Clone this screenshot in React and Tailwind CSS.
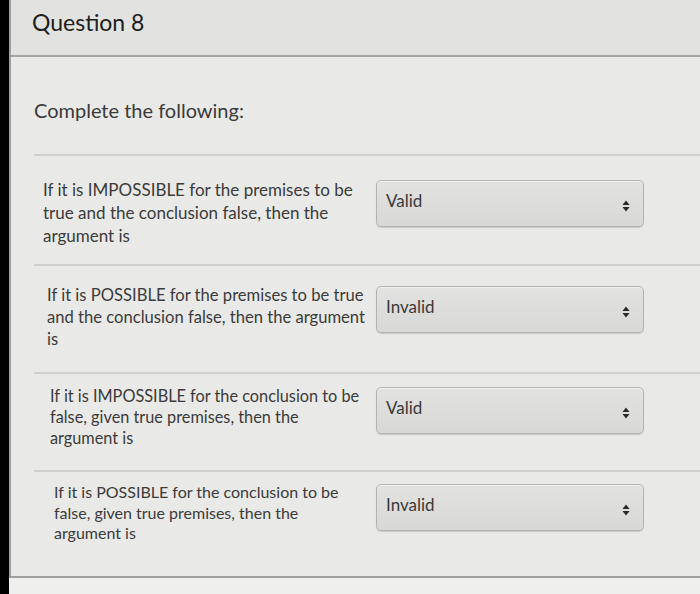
import React from "react";

const rows = [
  {
    lines: ["If it is IMPOSSIBLE for the premises to be", "true and the conclusion false, then the", "argument is"],
    value: "Valid",
    h: "h-[110px]",
    fs: "text-[17px] leading-[23px] pl-[9px]",
    pt: "pt-[22px]",
  },
  {
    lines: ["If it is POSSIBLE for the premises to be true", "and the conclusion false, then the argument", "is"],
    value: "Invalid",
    h: "h-[108px]",
    fs: "text-[16.6px] leading-[22px] pl-[13px]",
    pt: "pt-[18px]",
  },
  {
    lines: ["If it is IMPOSSIBLE for the conclusion to be", "false, given true premises, then the", "argument is"],
    value: "Valid",
    h: "h-[98px]",
    fs: "text-[16.3px] leading-[21px] pl-[16px]",
    pt: "pt-[11px]",
  },
  {
    lines: ["If it is POSSIBLE for the conclusion to be", "false, given true premises, then the", "argument is"],
    value: "Invalid",
    h: "flex-1",
    fs: "text-[16px] leading-[20.5px] pl-[20px]",
    pt: "pt-[10px]",
  },
];

function Arrows() {
  return (
    <svg width="8" height="12" viewBox="0 0 8 12" className="shrink-0">
      <path d="M4 0.5 L7.5 5 L0.5 5 Z" fill="#2a2a2a" />
      <path d="M4 11.5 L7.5 7 L0.5 7 Z" fill="#2a2a2a" />
    </svg>
  );
}

function Select({ value }) {
  return (
    <div className="w-[268px] h-[47px] rounded-[5px] border border-[#b3b3b1] bg-gradient-to-b from-[#e2e2e0] to-[#d8d8d6] shadow-[0_1px_1px_rgba(0,0,0,0.15),inset_0_1px_0_rgba(255,255,255,0.5)] flex items-start justify-between pl-[9px] pr-[13px] pt-[9px]">
      <span className="text-[17px] text-[#3a3a3a] leading-[22px]">{value}</span>
      <div className="pt-[10px]">
        <Arrows />
      </div>
    </div>
  );
}

export default function App() {
  return (
    <div className="w-[700px] h-[594px] bg-black flex overflow-hidden font-['Lato','Noto_Sans',sans-serif] text-[#3b3b3b]">
      <div className="w-[9px] shrink-0" />
      <div className="flex-1 flex flex-col bg-[#efefed]">
        <div className="h-[578px] shrink-0 flex flex-col border-l-2 border-b-2 border-[#9e9e9c] bg-[#e9e9e7]">
          <div className="h-[57px] shrink-0 bg-[#e2e2e0] border-b-2 border-[#a3a3a1] flex items-center pl-[21px]">
            <span className="text-[23px] text-[#202020] leading-none -mt-[10px]">Question 8</span>
          </div>
          <div className="flex-1 flex flex-col pl-[23px] pt-[39px]">
            <div className="text-[20px] leading-[28px] text-[#3a3a3a]">Complete the following:</div>
            <div className="mt-[30px] flex-1 flex flex-col">
              {rows.map((r, i) => (
                <div key={i} className={`border-t-2 border-[#cfcfcd] ${r.h} ${r.pt} flex`}>
                  <div className={`w-[342px] ${r.fs} text-[#3b3b3b] whitespace-nowrap`}>
                    {r.lines.map((l, j) => (
                      <div key={j}>{l}</div>
                    ))}
                  </div>
                  <div className="pt-[2px]">
                    <Select value={r.value} />
                  </div>
                </div>
              ))}
            </div>
          </div>
        </div>
      </div>
    </div>
  );
}
